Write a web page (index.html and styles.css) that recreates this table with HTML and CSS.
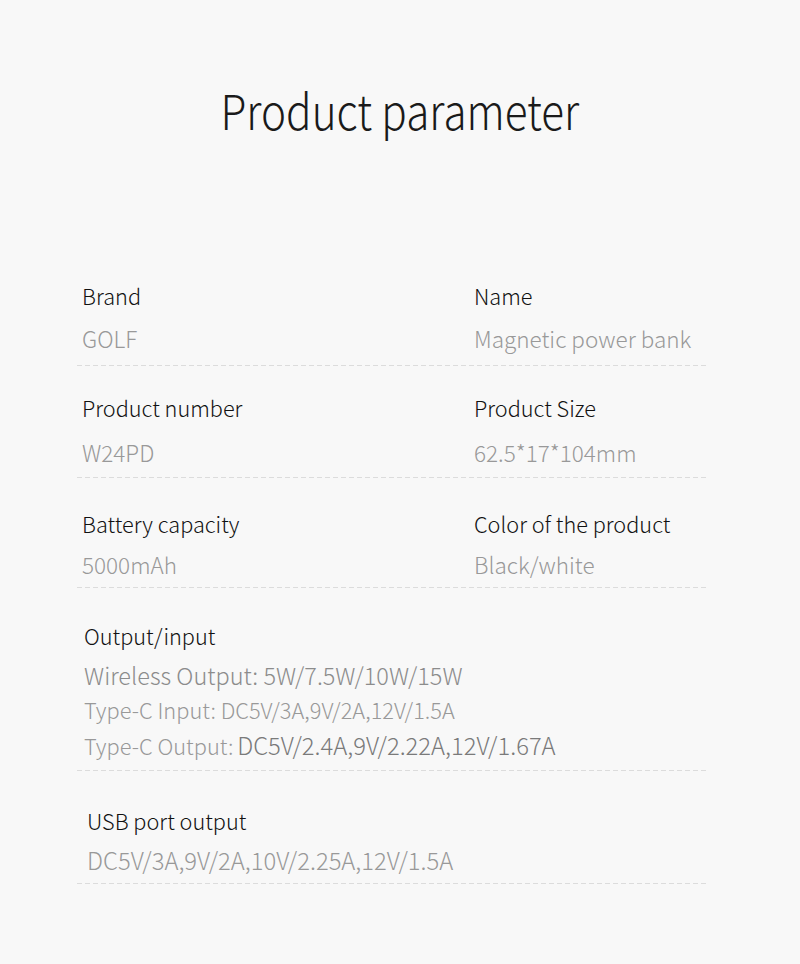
FILE: index.html
```html
<!DOCTYPE html>
<html lang="en">
<head>
<meta charset="utf-8">
<title>Product parameter</title>
<link rel="stylesheet" href="styles.css">
</head>
<body>
<main class="page">
  <h1 class="title"><span class="title-text">Product parameter</span></h1>
  <section class="params">
    <div class="row row-1">
      <div class="cell">
        <div class="label">Brand</div>
        <div class="value">GOLF</div>
      </div>
      <div class="cell cell-right">
        <div class="label">Name</div>
        <div class="value">Magnetic power bank</div>
      </div>
    </div>
    <div class="row row-2">
      <div class="cell">
        <div class="label">Product number</div>
        <div class="value">W24PD</div>
      </div>
      <div class="cell cell-right">
        <div class="label">Product Size</div>
        <div class="value">62.5*17*104mm</div>
      </div>
    </div>
    <div class="row row-3">
      <div class="cell">
        <div class="label">Battery capacity</div>
        <div class="value">5000mAh</div>
      </div>
      <div class="cell cell-right">
        <div class="label">Color of the product</div>
        <div class="value">Black/white</div>
      </div>
    </div>
    <div class="row row-wide row-4">
      <div class="cell cell-io">
        <div class="label">Output/input</div>
        <div class="value value-big">Wireless Output: 5W/7.5W/10W/15W</div>
        <div class="value value-line">Type-C Input: DC5V/3A,9V/2A,12V/1.5A</div>
        <div class="value value-line">Type-C Output: <span class="value-strong">DC5V/2.4A,9V/2.22A,12V/1.67A</span></div>
      </div>
    </div>
    <div class="row row-wide row-5">
      <div class="cell cell-usb">
        <div class="label">USB port output</div>
        <div class="value value-usb">DC5V/3A,9V/2A,10V/2.25A,12V/1.5A</div>
      </div>
    </div>
  </section>
</main>
</body>
</html>
```

FILE: styles.css
```css
html, body {
  margin: 0;
  padding: 0;
}

body {
  background: #f8f8f8;
  font-family: "Noto Sans CJK SC", "Noto Sans", sans-serif;
  font-weight: 300;
  color: #111;
  width: 800px;
  height: 964px;
  overflow: hidden;
}

.page {
  display: flex;
  flex-direction: column;
}

.title {
  margin: 85px 0 0;
  font-size: 48px;
  line-height: 48px;
  font-weight: 300;
  text-align: center;
  color: #1a1a1a;
}

.title-text {
  display: inline-block;
  transform: scaleX(0.88);
}

.params {
  margin: 148px 94px 0 77px;
  display: flex;
  flex-direction: column;
}

.row {
  display: grid;
  grid-template-columns: 397px 1fr;
}

.row::after {
  content: "";
  grid-column: 1 / -1;
  height: 1px;
  background-image: repeating-linear-gradient(to right, #dcdcdc 0 5px, transparent 5px 8px);
}

.row-wide {
  grid-template-columns: 1fr;
}

.cell {
  padding-left: 5px;
  display: flex;
  flex-direction: column;
}

.cell-right {
  padding-left: 0;
}

.label {
  font-size: 21.7px;
  line-height: 30px;
  color: #111;
  white-space: nowrap;
}

.value {
  font-size: 22.5px;
  line-height: 30px;
  color: #999;
  white-space: nowrap;
}

.row-1 .cell { padding-bottom: 12px; }
.row-1 .value { margin-top: 12px; }

.row-2 { padding-top: 27px; }
.row-2 .cell { padding-bottom: 10px; }
.row-2 .value { margin-top: 14px; }

.row-3 { padding-top: 31px; }
.row-3 .cell { padding-bottom: 8px; }
.row-3 .value { margin-top: 10px; }

.row-4 { padding-top: 33px; }
.cell-io { padding-left: 7px; padding-bottom: 9px; }
.cell-io .value { margin-top: 5px; }
.cell-io .value-big { margin-top: 9px; font-size: 23.5px; color: #8c8c8c; }
.value-line { font-size: 21.8px; }
.value-strong { color: #7a7a7a; font-size: 23.8px; margin-left: -1px; }

.row-5 { padding-top: 35px; }
.cell-usb { padding-left: 10px; padding-bottom: 8px; }
.value-usb { margin-top: 9px; font-size: 23.8px; }
```
